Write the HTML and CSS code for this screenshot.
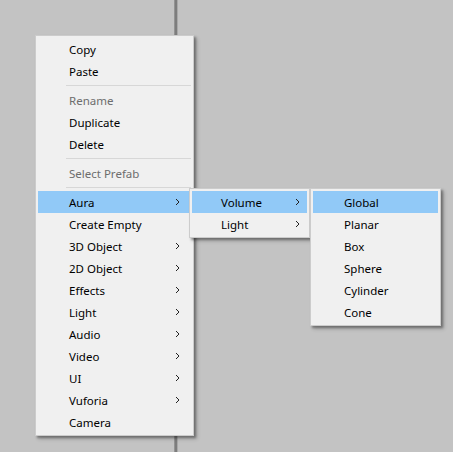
FILE: index.html
```html
<!DOCTYPE html>
<html lang="en">
<head>
<meta charset="utf-8">
<title>Hierarchy context menu</title>
<link rel="stylesheet" href="styles.css">
</head>
<body>
<div class="desk">
  <div class="divider"></div>

  <ul class="menu menu-main">
    <li class="item">Copy</li>
    <li class="item">Paste</li>
    <li class="sep"></li>
    <li class="item disabled">Rename</li>
    <li class="item">Duplicate</li>
    <li class="item">Delete</li>
    <li class="sep"></li>
    <li class="item disabled">Select Prefab</li>
    <li class="sep"></li>
    <li class="item active sub">Aura<svg class="chev" viewBox="0 0 5 8"><path d="M1 1l3 3-3 3"/></svg></li>
    <li class="item">Create Empty</li>
    <li class="item sub">3D Object<svg class="chev" viewBox="0 0 5 8"><path d="M1 1l3 3-3 3"/></svg></li>
    <li class="item sub">2D Object<svg class="chev" viewBox="0 0 5 8"><path d="M1 1l3 3-3 3"/></svg></li>
    <li class="item sub">Effects<svg class="chev" viewBox="0 0 5 8"><path d="M1 1l3 3-3 3"/></svg></li>
    <li class="item sub">Light<svg class="chev" viewBox="0 0 5 8"><path d="M1 1l3 3-3 3"/></svg></li>
    <li class="item sub">Audio<svg class="chev" viewBox="0 0 5 8"><path d="M1 1l3 3-3 3"/></svg></li>
    <li class="item sub">Video<svg class="chev" viewBox="0 0 5 8"><path d="M1 1l3 3-3 3"/></svg></li>
    <li class="item sub">UI<svg class="chev" viewBox="0 0 5 8"><path d="M1 1l3 3-3 3"/></svg></li>
    <li class="item sub">Vuforia<svg class="chev" viewBox="0 0 5 8"><path d="M1 1l3 3-3 3"/></svg></li>
    <li class="item">Camera</li>
  </ul>

  <ul class="menu menu-aura">
    <li class="item active sub">Volume<svg class="chev" viewBox="0 0 5 8"><path d="M1 1l3 3-3 3"/></svg></li>
    <li class="item sub">Light<svg class="chev" viewBox="0 0 5 8"><path d="M1 1l3 3-3 3"/></svg></li>
  </ul>

  <ul class="menu menu-volume">
    <li class="item active">Global</li>
    <li class="item">Planar</li>
    <li class="item">Box</li>
    <li class="item">Sphere</li>
    <li class="item">Cylinder</li>
    <li class="item">Cone</li>
  </ul>
</div>
</body>
</html>
```
FILE: styles.css
```css
html, body {
  margin: 0;
  padding: 0;
}

body {
  background: #c3c3c3;
  font-family: "Noto Sans", "Open Sans", sans-serif;
  font-size: 11.5px;
  color: #000;
}

.desk {
  position: relative;
  width: 453px;
  height: 452px;
  overflow: hidden;
}

/* splitter line running behind the menus */
.divider {
  position: absolute;
  left: 174px;
  top: 0;
  width: 4px;
  height: 452px;
  background: linear-gradient(to right, #a9a9a9 0, #7d7d7d 1px, #7d7d7d 3px, #a9a9a9 3px);
}

.menu {
  position: absolute;
  list-style: none;
  margin: 0;
  padding: 2px;
  background: #f0f0f0;
  border: 1px solid #cccccc;
  box-shadow: 2px 2px 2px rgba(0, 0, 0, 0.3), 3px 3px 4px rgba(0, 0, 0, 0.2);
  box-sizing: border-box;
}

.menu-main {
  left: 35px;
  top: 35px;
  width: 159px;
}

.menu-aura {
  left: 189px;
  top: 188px;
  width: 121px;
}

.menu-volume {
  left: 310px;
  top: 188px;
  width: 131px;
}

.item {
  height: 22px;
  display: flex;
  align-items: center;
  justify-content: space-between;
  padding-left: 31px;
  padding-right: 11px;
  white-space: nowrap;
}

.menu-aura .item {
  padding-left: 29px;
  padding-right: 7px;
}

.menu-volume .item {
  padding-left: 31px;
}

.item.active {
  background: #91c9f7;
}

.item.disabled {
  color: #6d6d6d;
}

.chev {
  width: 5px;
  height: 8px;
  fill: none;
  stroke: #222;
  stroke-width: 1;
}

.sep {
  height: 7px;
  display: flex;
  align-items: center;
  padding-left: 28px;
}

.sep::before {
  content: "";
  flex: 1;
  height: 1px;
  background: #d7d7d7;
}
```
